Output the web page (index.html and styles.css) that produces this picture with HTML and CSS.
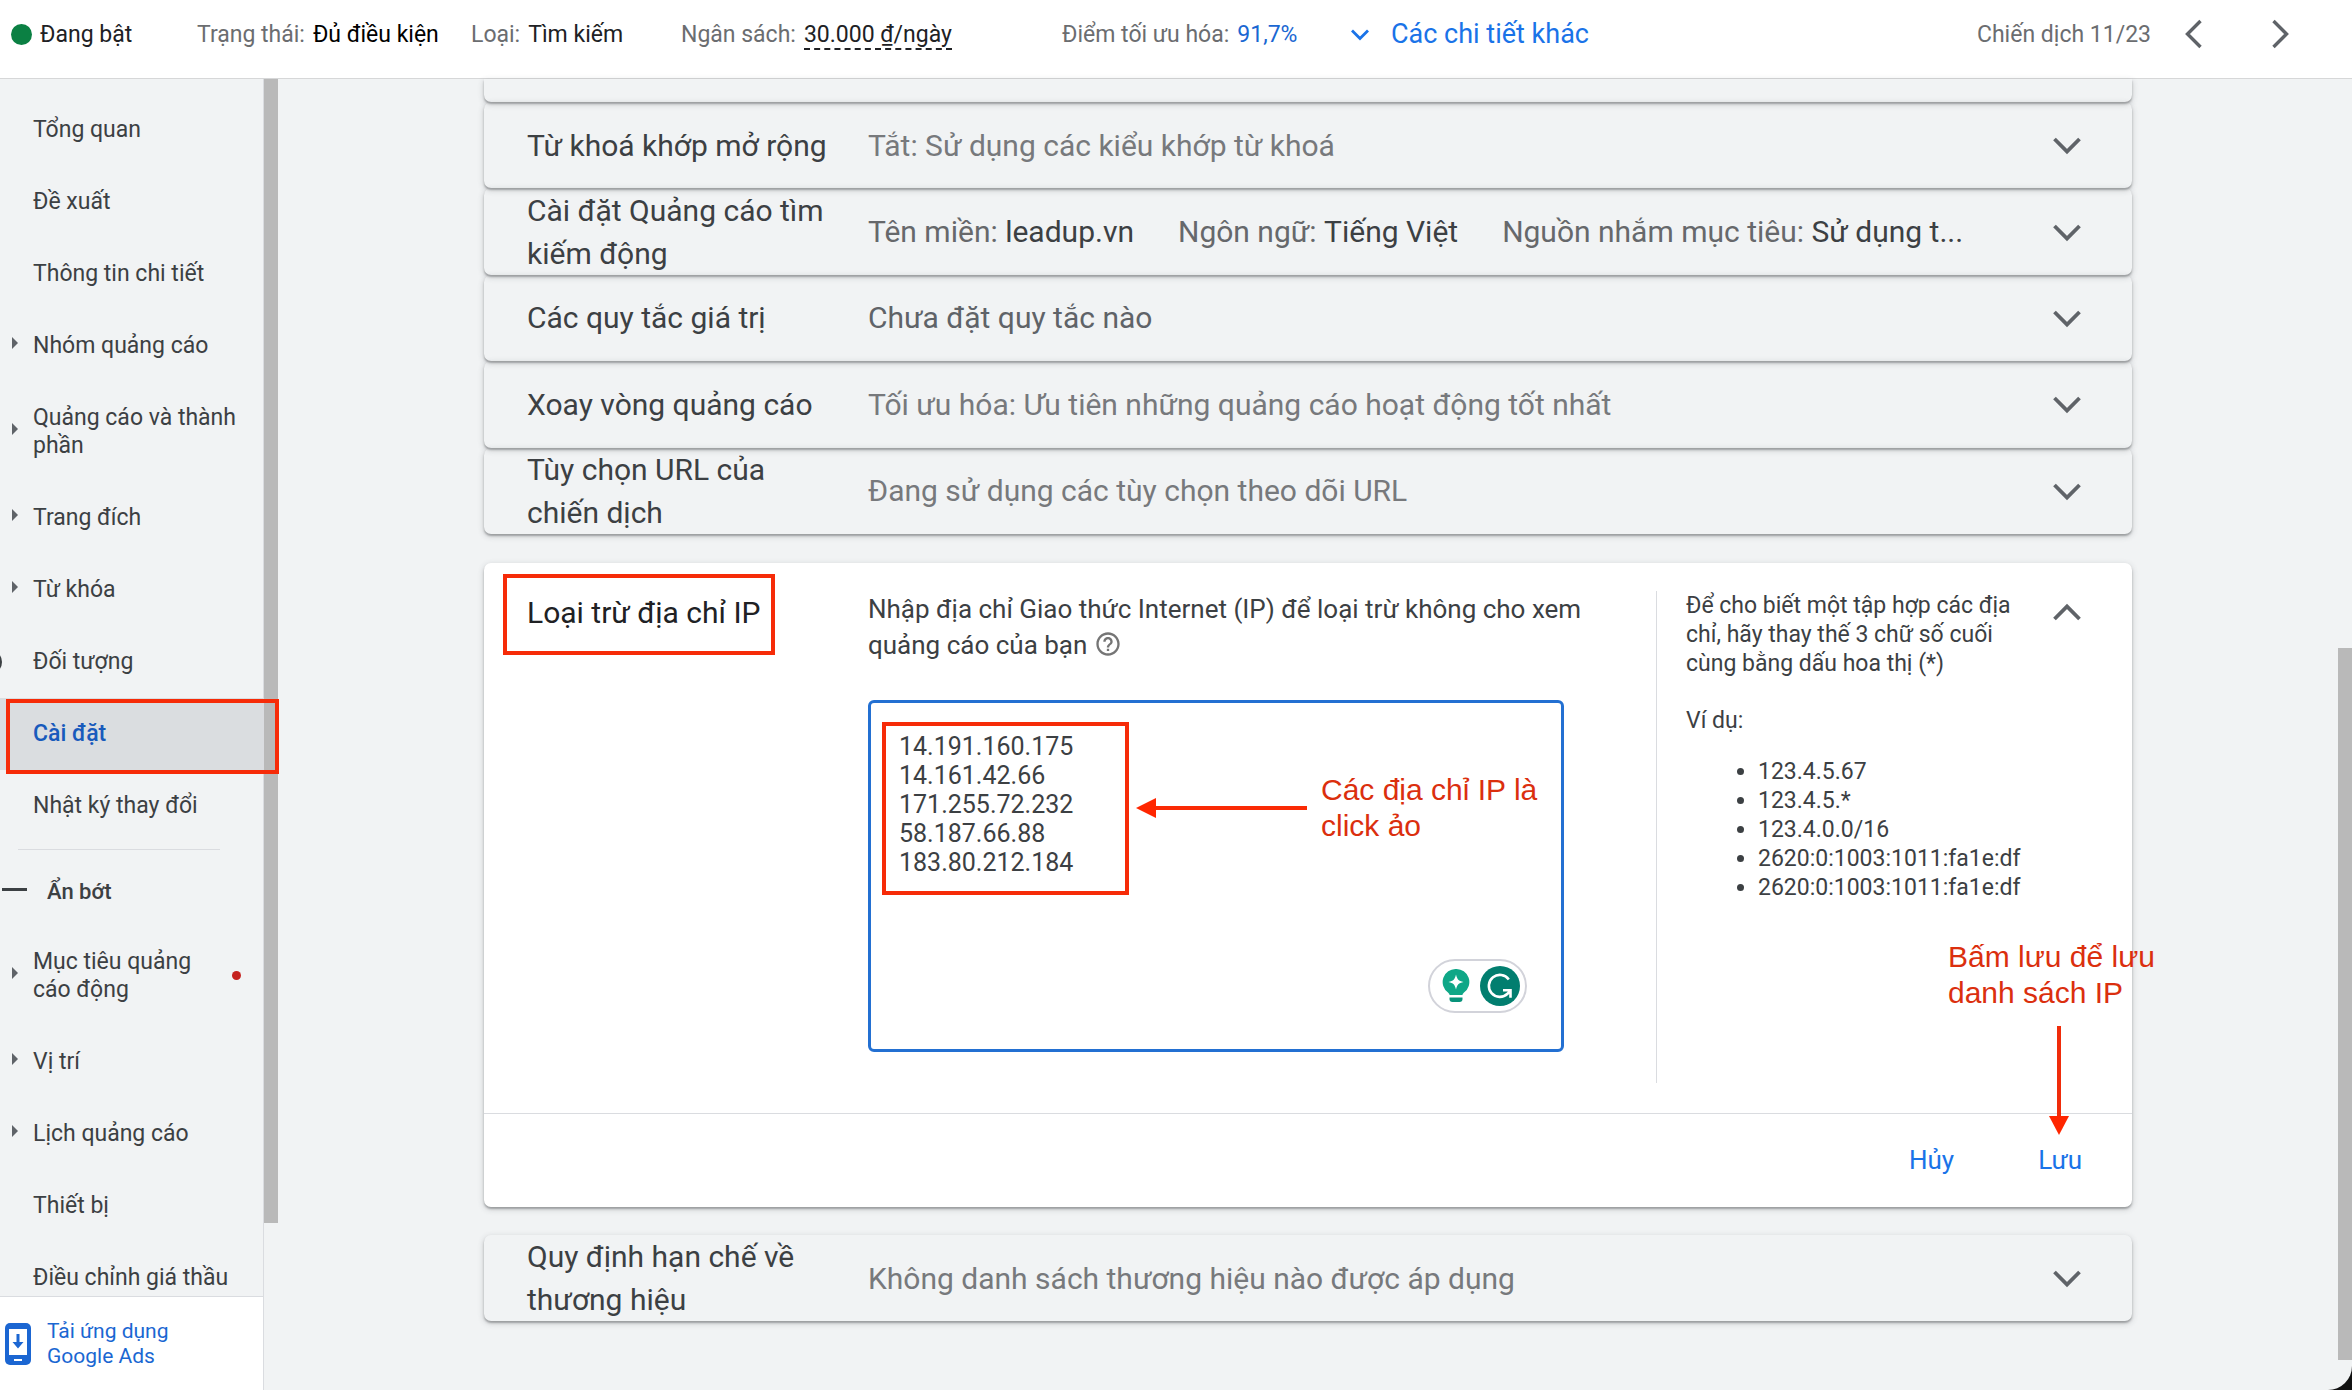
FILE: index.html
```
<!DOCTYPE html>
<html lang="vi">
<head>
<meta charset="utf-8">
<meta name="viewport" content="width=device-width, initial-scale=1">
<title>Cài đặt chiến dịch</title>
<link rel="stylesheet" href="styles.css">
</head>
<body>
<svg class="sprite" aria-hidden="true">
  <symbol id="chevron" viewBox="0 0 30 30"><path d="M2.500 9 15 21.500 27.500 9" fill="none" stroke="currentColor" stroke-width="3.800"/></symbol>
</svg>
<div class="app">
  <header class="topbar">
    <div class="pair"><span class="status-dot"></span>Đang bật</div>
    <div class="pair"><span class="muted">Trạng thái:</span><span class="strong">Đủ điều kiện</span></div>
    <div class="pair"><span class="muted">Loại:</span><span>Tìm kiếm</span></div>
    <div class="pair"><span class="muted">Ngân sách:</span><span class="budget">30.000 ₫/ngày</span></div>
    <div class="pair"><span class="muted">Điểm tối ưu hóa:</span><a class="score" href="#score">91,7%</a></div>
    <button class="more" type="button">
      <svg viewBox="0 0 34 34"><path d="M9 13.500 17 21.500 25 13.500" fill="none" stroke="currentColor" stroke-width="2.800"/></svg>
      Các chi tiết khác
    </button>
    <div class="pager">
      <span class="muted">Chiến dịch 11/23</span>
      <button type="button" aria-label="Chiến dịch trước"><svg viewBox="0 0 34 34"><path d="M23.500 4 10.500 17 23.500 30" fill="none" stroke="currentColor" stroke-width="3.400"/></svg></button>
      <button type="button" aria-label="Chiến dịch sau"><svg viewBox="0 0 34 34"><path d="M10.500 4 23.500 17 10.500 30" fill="none" stroke="currentColor" stroke-width="3.400"/></svg></button>
    </div>
  </header>

  <div class="workspace">
    <aside class="sidebar">
      <nav class="nav">
        <a href="#overview">Tổng quan</a>
        <a href="#recommendations">Đề xuất</a>
        <a href="#insights">Thông tin chi tiết</a>
        <a class="has-children" href="#groups">Nhóm quảng cáo</a>
        <a class="has-children" href="#ads">Quảng cáo và thành phần</a>
        <a class="has-children" href="#landing">Trang đích</a>
        <a class="has-children" href="#keywords">Từ khóa</a>
        <a class="audience" href="#audience">Đối tượng</a>
        <a class="active" href="#settings" aria-current="page">Cài đặt<span class="mark mark-nav"></span></a>
        <a href="#history">Nhật ký thay đổi</a>
        <button class="less" type="button">Ẩn bớt</button>
        <a class="has-children alert" href="#dynamic">Mục tiêu quảng cáo động</a>
        <a class="has-children" href="#locations">Vị trí</a>
        <a class="has-children" href="#schedule">Lịch quảng cáo</a>
        <a href="#devices">Thiết bị</a>
        <a href="#bids">Điều chỉnh giá thầu</a>
      </nav>
      <a class="get-app" href="#app">
        <svg viewBox="0 0 26 42"><rect width="26" height="42" rx="5" fill="#1b66d2"/><path d="M4 6h18v26H4z" fill="#fff"/><path d="M9 36h8v2H9z" fill="#fff"/><path d="M11.500 11h3v8h4L13 25.500 7.500 19h4z" fill="#1b66d2"/></svg>
        <span>Tải ứng dụng Google Ads</span>
      </a>
      <span class="scroll scroll-nav"></span>
    </aside>

    <main class="content">
      <div class="card card-cut"></div>
      <div class="cards">
        <button class="card" type="button"><span class="title">Từ khoá khớp mở rộng</span><span class="value">Tắt: Sử dụng các kiểu khớp từ khoá</span><svg class="chev"><use href="#chevron"/></svg></button>
        <button class="card" type="button"><span class="title">Cài đặt Quảng cáo tìm kiếm động</span><span class="value pairs"><span>Tên miền: <b>leadup.vn</b></span><span>Ngôn ngữ: <b>Tiếng Việt</b></span><span>Nguồn nhắm mục tiêu: <b>Sử dụng t...</b></span></span><svg class="chev"><use href="#chevron"/></svg></button>
        <button class="card" type="button"><span class="title">Các quy tắc giá trị</span><span class="value dark">Chưa đặt quy tắc nào</span><svg class="chev"><use href="#chevron"/></svg></button>
        <button class="card" type="button"><span class="title">Xoay vòng quảng cáo</span><span class="value">Tối ưu hóa: Ưu tiên những quảng cáo hoạt động tốt nhất</span><svg class="chev"><use href="#chevron"/></svg></button>
        <button class="card" type="button"><span class="title">Tùy chọn URL của chiến dịch</span><span class="value">Đang sử dụng các tùy chọn theo dõi URL</span><svg class="chev"><use href="#chevron"/></svg></button>
      </div>

      <section class="panel">
        <div class="panel-body">
          <h2 class="panel-title">Loại trừ địa chỉ IP<span class="mark mark-title"></span></h2>
          <div class="field">
            <label for="ips">Nhập địa chỉ Giao thức Internet (IP) để loại trừ không cho xem quảng cáo của bạn
              <svg class="help" viewBox="0 0 24 24"><path d="M11 18h2v-2h-2v2zm1-16C6.480 2 2 6.480 2 12s4.480 10 10 10 10-4.480 10-10S17.520 2 12 2zm0 18c-4.410 0-8-3.590-8-8s3.590-8 8-8 8 3.590 8 8-3.590 8-8 8zm0-14c-2.210 0-4 1.790-4 4h2c0-1.100.9-2 2-2s2 .9 2 2c0 2-3 1.750-3 5h2c0-2.250 3-2.500 3-5 0-2.210-1.790-4-4-4z" fill="currentColor"/></svg></label>
            <div class="box">
              <textarea id="ips" spellcheck="false">14.191.160.175
14.161.42.66
171.255.72.232
58.187.66.88
183.80.212.184</textarea>
              <span class="mark mark-ips"></span>
              <div class="note note-ips">
                <svg viewBox="0 0 171 20"><path d="M18 10h153" stroke="#fa2a05" stroke-width="4"/><path d="M0 10 20 0v20z" fill="#ff2600"/></svg>
                <p>Các địa chỉ IP là click ảo</p>
              </div>
              <div class="assist">
                <svg viewBox="0 0 28 34"><path d="M14 0a13 13 0 0 0-8 23.500c1 1 1.500 1.500 1.500 2.500h13c0-1 .5-1.500 1.500-2.500A13 13 0 0 0 14 0z" fill="#0fa787"/><path d="M7.500 28.500h13v1.500a3 3 0 0 1-3 3h-7a3 3 0 0 1-3-3z" fill="#08937a"/><path d="M14 5.500c1.200 5 2.500 6.300 7.500 7.500-5 1.200-6.300 2.500-7.500 7.500-1.200-5-2.500-6.300-7.500-7.500 5-1.200 6.300-2.500 7.500-7.500z" fill="#fff"/></svg>
                <svg viewBox="0 0 40 40"><circle cx="20" cy="20" r="20" fill="#027e6f"/><path d="M28.800 13.500A11 11 0 1 0 27.500 27.800L30.300 24.500M23 24.300h7.500v7.500" fill="none" stroke="#fff" stroke-width="2.600"/></svg>
              </div>
            </div>
          </div>
          <div class="tip">
            <p>Để cho biết một tập hợp các địa chỉ, hãy thay thế 3 chữ số cuối cùng bằng dấu hoa thị (*)</p>
            <p>Ví dụ:</p>
            <ul>
              <li>123.4.5.67</li>
              <li>123.4.5.*</li>
              <li>123.4.0.0/16</li>
              <li>2620:0:1003:1011:fa1e:df</li>
              <li>2620:0:1003:1011:fa1e:df</li>
            </ul>
          </div>
          <button class="collapse" type="button" aria-label="Thu gọn"><svg class="chev up"><use href="#chevron"/></svg></button>
        </div>
        <div class="actions">
          <button type="button">Hủy</button>
          <button type="button">Lưu</button>
        </div>
        <div class="note note-save">
          <p>Bấm lưu để lưu danh sách IP</p>
          <svg viewBox="0 0 20 109"><path d="M10 0v92" stroke="#f02c0a" stroke-width="4"/><path d="M0 90h20L10 109z" fill="#ff2600"/></svg>
        </div>
      </section>

      <button class="card" type="button"><span class="title">Quy định hạn chế về thương hiệu</span><span class="value">Không danh sách thương hiệu nào được áp dụng</span><svg class="chev"><use href="#chevron"/></svg></button>
      <span class="scroll scroll-main"></span>
    </main>
  </div>
</div>
</body>
</html>
```
FILE: styles.css
```
*, *::before, *::after { box-sizing: border-box; }

body {
  margin: 0;
  background: #111;
  color: #202124;
  font-family: Roboto, "Liberation Sans", sans-serif;
  font-size: 23px;
}

button {
  border: 0;
  padding: 0;
  background: none;
  color: inherit;
  font: inherit;
}

a { color: inherit; text-decoration: none; }
p, h2, ul { margin: 0; }
svg { display: block; }
.sprite { position: absolute; width: 0; height: 0; }

.app {
  display: flex;
  flex-direction: column;
  height: 100vh;
  overflow: hidden;
  background: #f1f3f4;
  border-bottom-right-radius: 24px;
}

/* Top bar */
.topbar {
  display: grid;
  grid-template-columns: 186px 274px 210px 381px 281px auto 1fr;
  align-items: center;
  flex: none;
  height: 79px;
  padding: 0 55px 10px 11px;
  border-bottom: 1px solid #d6d7d8;
  background: #fff;
  white-space: nowrap;
}
.pair { display: flex; align-items: center; gap: 8px; }
.status-dot { width: 21px; height: 21px; border-radius: 50%; background: #0b8043; }
.muted { color: #6b6d70; }
.strong { color: #000; }
.budget { margin-bottom: -2px; border-bottom: 2px dashed #202124; }
.score { color: #1a67d2; }
.more {
  display: flex;
  align-items: center;
  gap: 14px;
  color: #1a73e8;
  font-size: 27px;
  font-weight: 450;
}
.more svg { width: 34px; height: 34px; }
.pager { display: flex; align-items: center; justify-content: flex-end; gap: 26px; }
.pager button { color: #5f6368; }
.pager button + button { margin-left: 26px; }
.pager svg { width: 34px; height: 34px; }

.workspace { display: flex; flex: 1; min-height: 0; }

/* Sidebar */
.sidebar {
  position: relative;
  z-index: 1;
  display: flex;
  flex-direction: column;
  flex: none;
  width: 264px;
  border-right: 1px solid #dadce0;
}
.nav {
  flex: 1;
  min-height: 0;
  padding-top: 15px;
  overflow-x: visible;
  overflow-y: clip;
  color: #3c4043;
  line-height: 28px;
}
.nav a {
  position: relative;
  display: block;
  padding: 22px 20px 22px 33px;
}
.has-children::before {
  content: "";
  position: absolute;
  left: 12px;
  top: calc(50% - 9px);
  border: 6px solid transparent;
  border-left-color: #5f6368;
  border-right-width: 0;
}
.audience::before {
  content: "";
  position: absolute;
  left: -22px;
  top: 24px;
  width: 24px;
  height: 24px;
  border: 3px solid #3c4043;
  border-radius: 50%;
}
.nav .active { background: #dadde0; color: #185abc; font-weight: 500; }
.nav .alert { padding-right: 50px; }
.alert::after {
  content: "";
  position: absolute;
  right: 22px;
  top: calc(50% - 5px);
  width: 9px;
  height: 9px;
  border-radius: 50%;
  background: #c5221f;
}
.less {
  position: relative;
  display: block;
  width: 202px;
  height: 77px;
  margin: 7px 0 0 18px;
  padding: 8px 0 0 29px;
  border-top: 1px solid #dadce0;
  font-size: 22px;
  font-weight: 500;
  text-align: left;
}
.less::before {
  content: "";
  position: absolute;
  left: -16px;
  top: 38px;
  width: 25px;
  height: 3px;
  background: #3c4043;
}
.get-app {
  display: flex;
  align-items: center;
  gap: 16px;
  flex: none;
  height: 94px;
  padding: 0 60px 0 5px;
  border-top: 1px solid #dadce0;
  background: #fff;
  color: #1a67d2;
  font-size: 21px;
  line-height: 25px;
}
.get-app svg { flex: none; width: 26px; height: 42px; }

.scroll { position: absolute; width: 14px; background: #b9b9b9; }
.scroll-nav { left: 264px; top: 0; bottom: 167px; }
.scroll-main { right: 0; top: 569px; bottom: 30px; }

/* Settings list */
.content {
  position: relative;
  flex: 1;
  min-width: 0;
  padding: 0 220px;
}
.card, .panel {
  border-radius: 7px;
  box-shadow: 0 2px 2px rgba(60, 64, 67, .36), 0 2px 6px rgba(60, 64, 67, .24);
}
.card {
  display: flex;
  align-items: center;
  width: 100%;
  min-height: 86px;
  padding: 0 50px 0 43px;
  font-size: 30px;
  line-height: 43px;
  text-align: left;
}
.card-cut {
  min-height: 0;
  height: 23px;
  border-radius: 0 0 7px 7px;
}
.cards {
  display: grid;
  grid-auto-rows: 1fr;
  min-height: 432px;
}
.title { flex: none; width: 341px; padding-right: 33px; color: #3c4043; font-weight: 450; }
.value { flex: 1; color: #77797c; white-space: nowrap; }
.pairs { display: flex; gap: 44px; color: #66686b; }
.dark { color: #5f6368; }
.value b { color: #3c4043; font-weight: 450; }
.chev { flex: none; width: 30px; height: 30px; color: #5f6368; }
.up { transform: rotate(180deg); }

/* Expanded panel */
.panel { position: relative; margin: 29px 0 28px; background: #fff; }
.panel-body {
  display: grid;
  grid-template-columns: 384px minmax(0, 1fr) 366px 90px;
  padding: 28px 20px 30px 0;
  border-bottom: 1px solid #dadce0;
}
.panel-title {
  position: relative;
  padding-left: 43px;
  font-size: 30px;
  font-weight: 450;
  line-height: 43px;
}
.field { padding-bottom: 31px; color: #3c4043; }
.field label {
  display: block;
  max-width: 760px;
  font-size: 26px;
  line-height: 36px;
}
.help {
  display: inline-block;
  width: 28px;
  height: 28px;
  vertical-align: -4px;
  color: #757575;
}
.box { position: relative; margin: 37px 92px 0 0; }
.box textarea {
  display: block;
  width: 100%;
  height: 352px;
  padding: 29px 28px;
  border: 3px solid #2370d2;
  border-radius: 6px;
  outline: 0;
  resize: none;
  background: #fff;
  color: #3c4043;
  font: 25px/29px Roboto, "Liberation Sans", sans-serif;
}
.assist {
  position: absolute;
  right: 37px;
  bottom: 39px;
  display: flex;
  align-items: center;
  gap: 10px;
  height: 54px;
  padding: 0 5px 0 12px;
  border: 2px solid #d2d3da;
  border-radius: 27px;
  background: #fff;
}
.assist svg:first-child { width: 28px; height: 34px; }
.assist svg:last-child { width: 40px; height: 40px; }
.tip {
  padding-left: 29px;
  border-left: 1px solid #dadce0;
  color: #3c4043;
  line-height: 29px;
}
.tip p { margin-bottom: 28px; }
.tip p + p { margin-bottom: 22px; }
.tip ul { padding-left: 72px; white-space: nowrap; }
.collapse { align-self: start; display: flex; justify-content: center; padding-top: 7px; }
.actions {
  display: flex;
  justify-content: flex-end;
  align-items: center;
  gap: 84px;
  height: 93px;
  padding: 0 50px 2px 0;
  color: #1a73e8;
  font-size: 26px;
  font-weight: 450;
}

/* Red annotations */
.mark { position: absolute; border: 4px solid #f62b08; }
.mark-nav { z-index: 2; left: 6px; right: -16px; top: 1px; bottom: -4px; }
.scroll-nav { z-index: -1; }
.mark-title { left: 19px; top: -17px; width: 272px; height: 81px; }
.mark-ips { left: 14px; top: 22px; width: 247px; height: 173px; }
.note {
  position: absolute;
  color: #db2f0e;
  font-family: "Liberation Sans", Arial, sans-serif;
  font-size: 30px;
  line-height: 36px;
}
.note-ips { left: 268px; top: 72px; display: flex; align-items: center; gap: 14px; width: 420px; }
.note-ips svg { flex: none; width: 171px; height: 20px; }
.note-save { right: -36px; top: 376px; width: 220px; }
.note-save svg { width: 20px; height: 109px; margin: 15px 0 0 101px; }
```
